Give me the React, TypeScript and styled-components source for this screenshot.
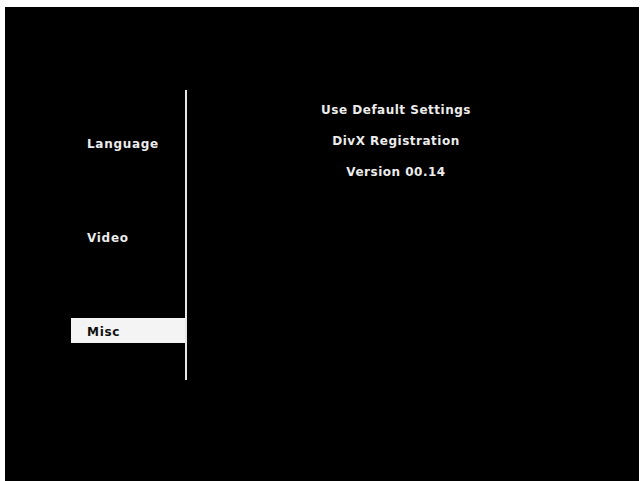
import React from 'react';
import styled, { createGlobalStyle } from 'styled-components';

const GlobalStyle = createGlobalStyle`
  html, body {
    margin: 0;
    padding: 0;
    height: 100%;
    background: #ffffff;
  }
  #root {
    height: 100%;
  }
`;

const Page = styled.div`
  box-sizing: border-box;
  height: 100%;
  padding: 7px 4px 0 5px;
  background: #ffffff;
`;

const Screen = styled.div`
  display: flex;
  height: 100%;
  background: #000000;
  font-family: "DejaVu Sans", "Verdana", sans-serif;
  font-weight: bold;
  font-size: 12px;
  color: #ececec;
`;

const NavColumn = styled.div`
  width: 182px;
  flex-shrink: 0;
`;

const NavRail = styled.div`
  box-sizing: border-box;
  margin-top: 83px;
  height: 290px;
  padding: 40px 0 37px 66px;
  border-right: 2px solid #e6e6e6;
  display: flex;
  flex-direction: column;
  justify-content: space-between;
`;

const NavItem = styled.div<{ $active?: boolean }>`
  box-sizing: border-box;
  height: 25px;
  padding: 3px 0 0 16px;
  line-height: 22px;
  letter-spacing: 0.7px;
  background: ${p => (p.$active ? '#f4f4f4' : 'transparent')};
  color: ${p => (p.$active ? '#111111' : '#ececec')};
`;

const Options = styled.div`
  flex: 1;
  display: flex;
  flex-direction: column;
  align-items: center;
  padding: 88px 34px 0 0;
`;

const Option = styled.div`
  line-height: 31px;
  letter-spacing: 0.5px;
`;

export default function App() {
  const menu = ['Language', 'Video', 'Misc'];
  const active = 'Misc';
  const options = ['Use Default Settings', 'DivX Registration', 'Version 00.14'];

  return (
    <>
      <GlobalStyle />
      <Page>
        <Screen>
          <NavColumn>
            <NavRail>
              {menu.map(item => (
                <NavItem key={item} $active={item === active}>{item}</NavItem>
              ))}
            </NavRail>
          </NavColumn>
          <Options>
            {options.map(opt => (
              <Option key={opt}>{opt}</Option>
            ))}
          </Options>
        </Screen>
      </Page>
    </>
  );
}
